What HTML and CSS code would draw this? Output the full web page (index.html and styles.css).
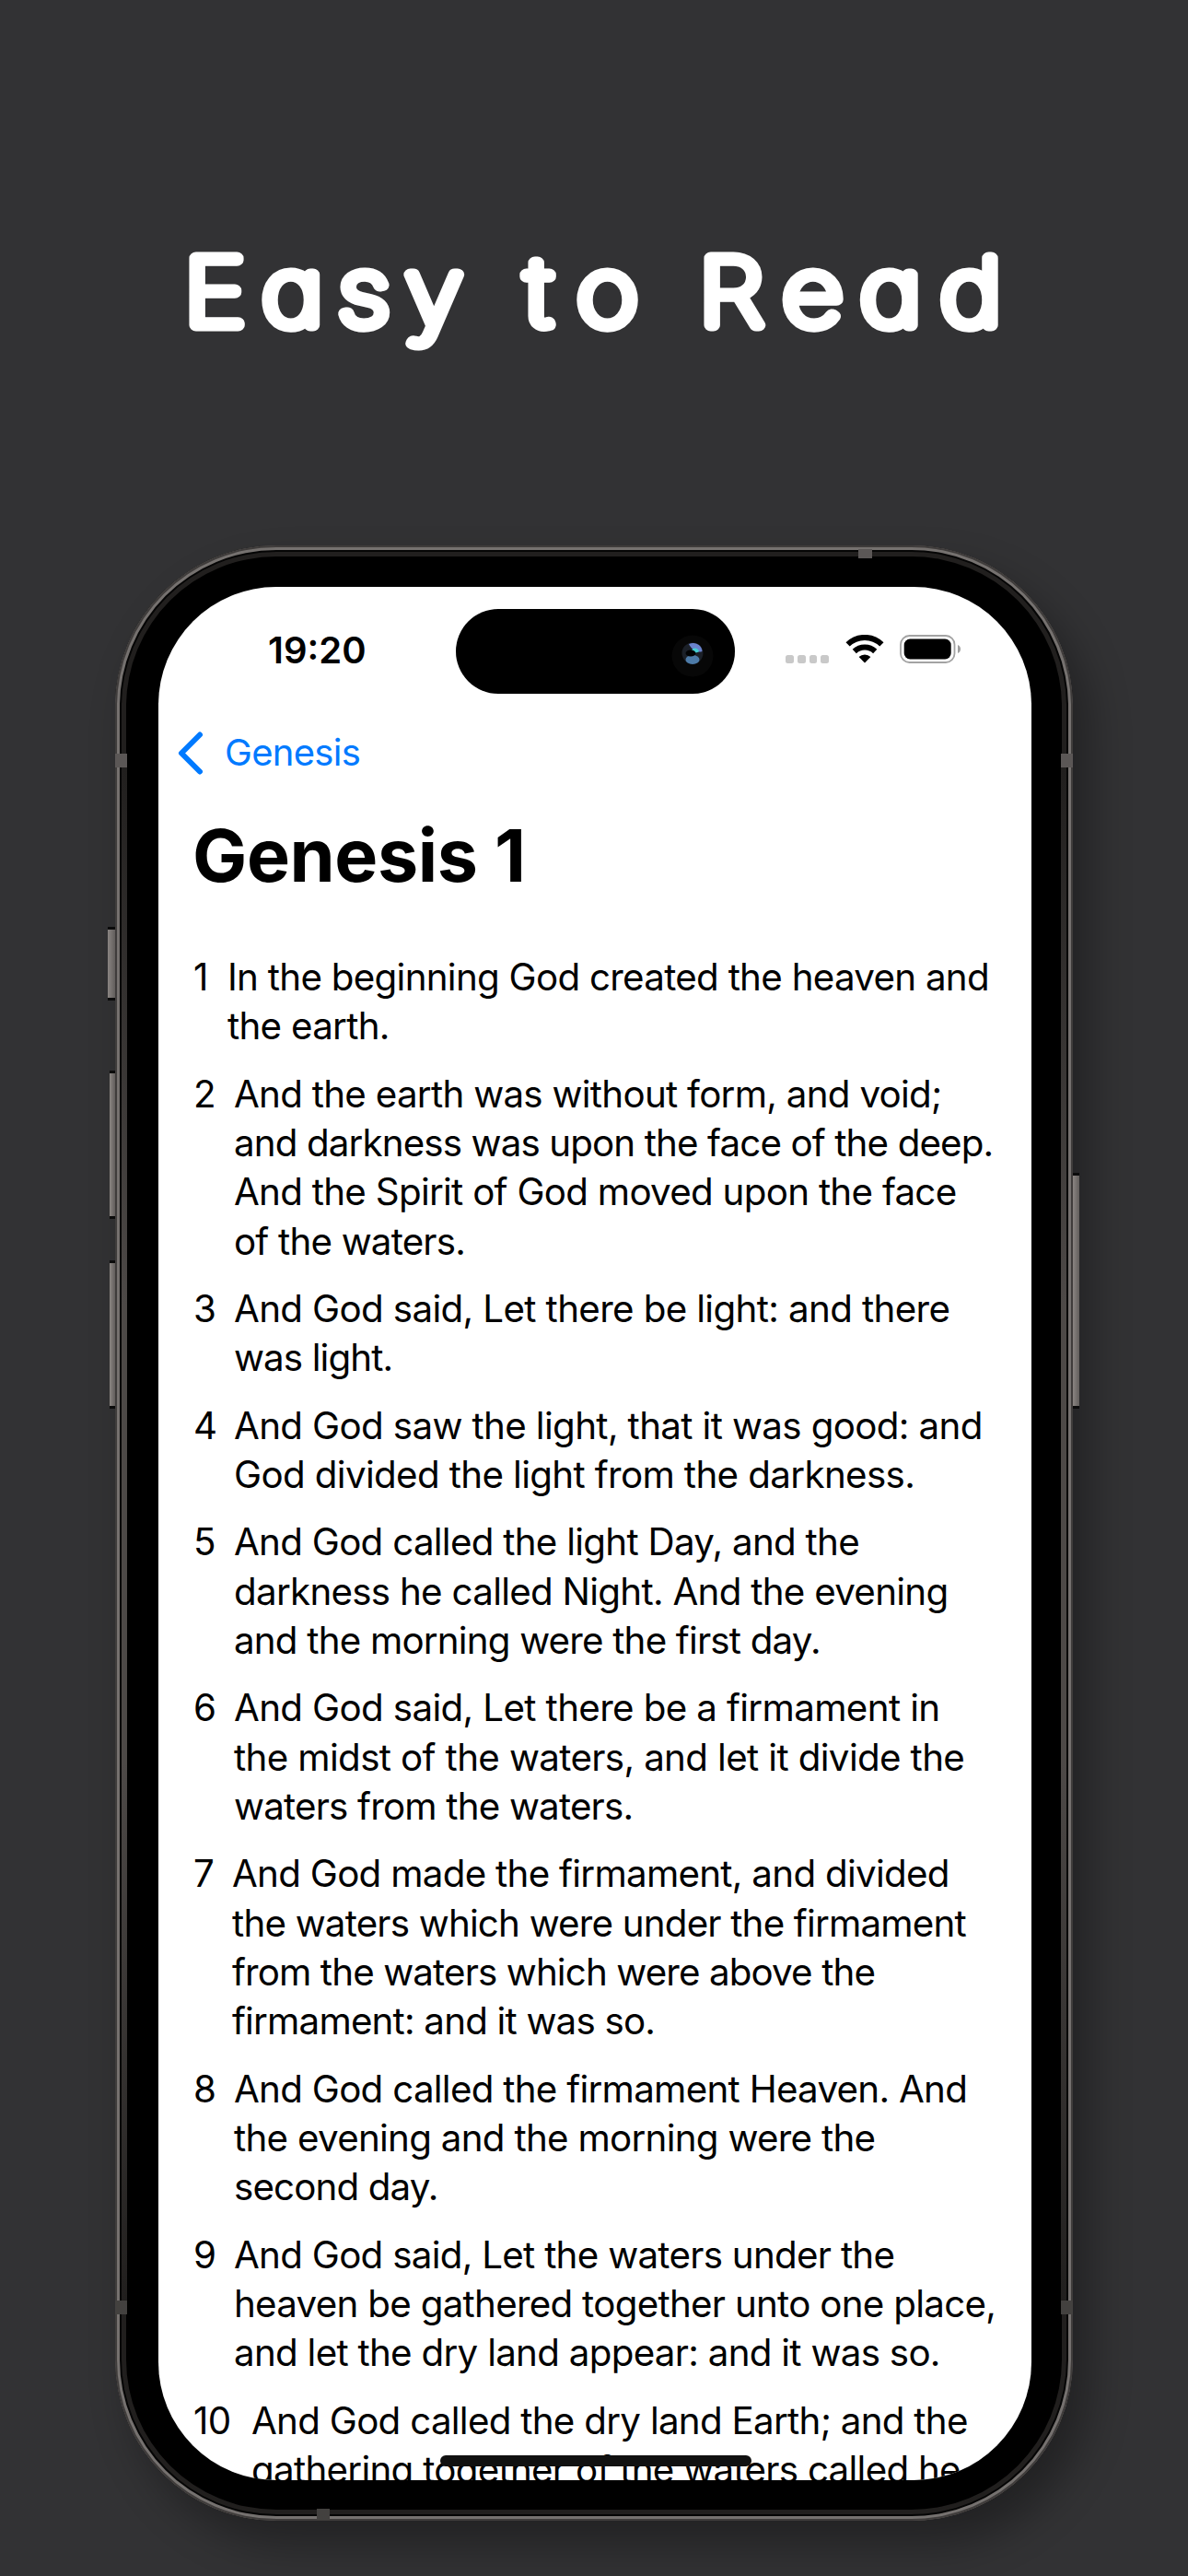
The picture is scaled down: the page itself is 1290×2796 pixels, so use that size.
FILE: index.html
```
<!DOCTYPE html>
<html lang="en">
<head>
<meta charset="utf-8">
<title>Easy to Read</title>
<link rel="stylesheet" href="styles.css">
</head>
<body>
<h1 class="headline">
<svg class="headline-art" viewBox="0 0 1290 200" role="img" aria-label="Easy to Read">
<text transform="scale(1.14 1)" y="123.500" x="175.500 249.600 322 386.100 450 501.200 549.600 615 665.700 745.300 819.400 895.700">Easy to Read</text>
</svg>
</h1>
<main class="phone">
<i class="key mute"></i><i class="key vol-up"></i><i class="key vol-down"></i><i class="key power"></i>
<i class="band top"></i><i class="band bottom"></i><i class="band l1"></i><i class="band r1"></i><i class="band l2"></i><i class="band r2"></i>
<div class="screen">
<div class="status">
<span class="time">19:20</span>
<div class="island">
<svg class="camera" viewBox="0 0 48 48">
<circle cx="24" cy="24" r="22.5" fill="#070707"/>
<circle cx="24" cy="21" r="11.500" fill="#1b2028"/>
<path d="M20 11c7-3 14 1 14.500 8-5 2-11-1-14.500-8z" fill="#6a82cc"/>
<path d="M23 18c2-4 7-3 8 1-2 2-6 2-8-1z" fill="#45cfd2"/>
<ellipse cx="24" cy="28" rx="7.500" ry="5" fill="#4d7ba8"/>
<ellipse cx="22" cy="21" rx="5.500" ry="3.500" fill="#020304"/>
</svg>
</div>
<div class="dots"><i></i><i></i><i></i><i></i></div>
<svg class="wifi" viewBox="0 0 42 31">
<g fill="none" stroke="#000" stroke-width="6">
<path d="M2.600 10.400a26.300 26.300 0 0 1 36.800 0"/>
<path d="M9.800 18a16 16 0 0 1 22.400 0"/>
</g>
<path d="M21 30.500l-6.400-6.600a9.400 9.400 0 0 1 12.800 0z"/>
</svg>
<svg class="battery" viewBox="0 0 67 31">
<rect x="1" y="1" width="58.500" height="29" rx="9.500" fill="none" stroke="#a3a3a3" stroke-width="1.800"/>
<rect x="4.700" y="4.600" width="51" height="21.800" rx="6.500"/>
<path d="M63 11c4 1.400 4 7.600 0 9z" fill="#a0a0a0"/>
</svg>
</div>
<nav class="nav">
<svg class="chevron" viewBox="0 0 28 47"><path d="M24 3.500L4 23.500l20 20" fill="none" stroke="#007aff" stroke-width="6" stroke-linecap="round" stroke-linejoin="round"/></svg>
<span>Genesis</span>
</nav>
<h2 class="title">Genesis 1</h2>
<ol class="verses">
<li class="narrow"><b>1</b><p>In the beginning God created the heaven and<br>the earth.</p></li>
<li><b>2</b><p>And the earth was without form, and void;<br><span class="tighter">and darkness was upon the face of the deep.</span><br>And the Spirit of God moved upon the face<br><span class="tight">of the waters.</span></p></li>
<li><b>3</b><p><span class="loose">And God said, Let there be light: and there</span><br><span class="tighter">was light.</span></p></li>
<li><b>4</b><p><span class="loose">And God saw the light, that it was good: and<br>God divided the light from the darkness.</span></p></li>
<li><b>5</b><p>And God called the light Day, and the<br>darkness he called Night. And the evening<br><span class="tight">and the morning were the first day.</span></p></li>
<li><b>6</b><p><span class="loose">And God said, Let there be a firmament in<br>the midst of the waters, and let it divide the</span><br><span class="tight">waters from the waters.</span></p></li>
<li class="seven"><b>7</b><p>And God made the firmament, and divided<br><span class="tight">the waters which were under the firmament</span><br><span class="tighter">from the waters which were above the</span><br><span class="tight">firmament: and it was so.</span></p></li>
<li><b>8</b><p>And God called the firmament Heaven. And<br>the evening and the morning were the<br><span class="tighter">second day.</span></p></li>
<li><b>9</b><p>And God said, Let the waters under the<br>heaven be gathered together unto one place,<br>and let the dry land appear: and it was so.</p></li>
<li class="wide"><b>10</b><p>And God called the dry land Earth; and the<br>gathering together of the waters called he</p></li>
</ol>
<i class="home"></i>
</div>
</main>
</body>
</html>
```
FILE: styles.css
```
* { box-sizing: border-box; }
html { background: #323234; }
body {
  margin: 0;
  width: 1290px;
  height: 2796px;
  overflow: hidden;
  display: flex;
  flex-direction: column;
  align-items: center;
  background: #323234;
  font-family: Inter, "Liberation Sans", sans-serif;
}
.headline { margin: 0; height: 592px; padding-top: 230px; }
.headline-art { display: block; width: 1290px; height: 200px; }
.headline-art text {
  font-family: Inter, sans-serif;
  font-size: 100px;
  font-weight: 100;
  font-feature-settings: "cv11";
  fill: #fff;
  stroke: #fff;
  stroke-width: 13px;
  stroke-linejoin: round;
}
.phone {
  position: relative;
  flex: none;
  width: 1040px;
  height: 2144px;
  padding: 45px 45px 44px 47px;
  border-radius: 175px;
  background: #000;
  box-shadow:
    inset 0 0 0 2px #3f3c3b,
    inset 0 0 0 5px #75716f,
    inset 0 0 0 7px #050505,
    inset 0 0 0 12px #211f1e,
    18px 26px 45px rgba(0, 0, 0, .32);
}
.phone::before,
.phone::after {
  content: "";
  position: absolute;
  top: 241px;
  width: 6px;
  height: 1664px;
  background: linear-gradient(#211f1e, #4d4947 35%, #4d4947 65%, #211f1e);
}
.phone::before { left: 7px; }
.phone::after { right: 7px; }
.key {
  position: absolute;
  width: 7px;
  background: linear-gradient(90deg, #8a8582, #625e5c);
  border-top: 3px solid #0b0b0b;
  border-bottom: 3px solid #0b0b0b;
}
.mute { left: -8px; width: 8px; top: 414px; height: 80px; }
.vol-up { left: -6px; width: 6px; top: 570px; height: 161px; }
.vol-down { left: -6px; width: 6px; top: 776px; height: 161px; }
.power { left: 1040px; top: 681px; height: 256px; }
.band { position: absolute; background: #5b5756; }
.top { left: 807px; top: 4px; width: 15px; height: 10px; }
.bottom { left: 219px; top: 2131px; width: 14px; height: 12px; background: #43413f; }
.l1, .r1, .l2, .r2 { width: 13px; height: 15px; top: 226px; }
.l1, .l2 { left: 0; }
.r1, .r2 { right: 0; }
.l2, .r2 { top: 1905px; background: #43413f; }
.screen {
  position: relative;
  width: 948px;
  height: 2055px;
  overflow: hidden;
  border-radius: 128px;
  background: #fff;
  color: #000;
}
.status { display: flex; align-items: center; height: 137px; padding-left: 119px; }
.time { width: 204px; font-size: 40px; font-weight: 600; line-height: 48px; }
.island {
  display: flex;
  align-items: center;
  justify-content: flex-end;
  width: 303px;
  height: 92px;
  margin-top: 3px;
  padding-right: 22px;
  border-radius: 46px;
  background: #000;
}
.camera { width: 48px; height: 48px; margin-top: 9px; }
.dots { display: flex; gap: 4px; margin: 20px 18px 0 55px; }
.dots i { width: 8.8px; height: 8.5px; border-radius: 2.5px; background: #c9c9c9; }
.wifi { width: 42px; height: 31px; margin: 0 17px 2px 0; }
.battery { width: 67px; height: 31px; margin-bottom: 2px; }
.nav { display: flex; align-items: center; height: 86px; gap: 23px; padding-left: 21px; color: #007aff; font-size: 40px; line-height: 48px; letter-spacing: -.7px; }
.chevron { width: 28px; height: 47px; }
.title { margin: 20px 0 58px 37px; font-size: 79px; font-weight: 700; line-height: 96px; letter-spacing: -.4px; white-space: nowrap; }
.verses { display: flex; flex-direction: column; gap: 20px; margin: 0; padding: 0 0 0 38px; list-style: none; }
.verses li { display: grid; grid-template-columns: 44px 1fr; font-size: 40.3px; line-height: 53.33px; letter-spacing: -.71px; white-space: nowrap; }
.verses .narrow { grid-template-columns: 37px 1fr; }
.verses .seven { grid-template-columns: 42px 1fr; }
.verses .wide { grid-template-columns: 63px 1fr; }
.verses b { font-weight: 400; }
.verses p { margin: 0; }
.loose { letter-spacing: -.63px; }
.tight { letter-spacing: -.8px; }
.tighter { letter-spacing: -.87px; }
.home { position: absolute; left: 306px; top: 2028px; width: 338px; height: 12px; border-radius: 6px; background: #111; }
```
